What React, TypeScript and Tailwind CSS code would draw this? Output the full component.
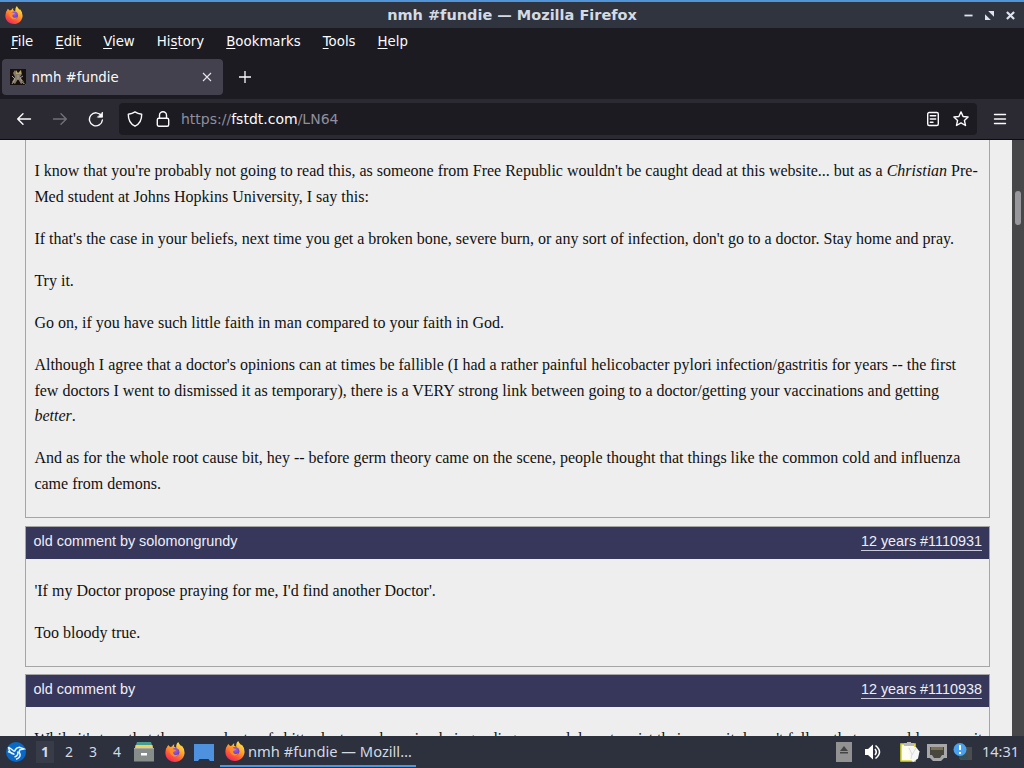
import type { ReactNode } from "react";

const menus = ["File", "Edit", "View", "History", "Bookmarks", "Tools", "Help"];

function FirefoxIcon({ className }: { className: string }) {
  return (
    <svg viewBox="0 0 20 20" className={className}>
      <defs>
        <linearGradient id="flame" x1="0.8" y1="0" x2="0.25" y2="1">
          <stop offset="0" stopColor="#fff04f" />
          <stop offset="0.4" stopColor="#ffa52b" />
          <stop offset="0.7" stopColor="#ff5a35" />
          <stop offset="1" stopColor="#ed2265" />
        </linearGradient>
        <radialGradient id="globe" cx="0.5" cy="0.3" r="0.7">
          <stop offset="0" stopColor="#a460e8" />
          <stop offset="1" stopColor="#5c3bb5" />
        </radialGradient>
      </defs>
      <path
        d="M3.2 3 L5.2 5.1 L7 4.4 Q8 2.8 9.2 2.3 L9 4.5 L11.3 6 Q10.6 2.5 13.2 0 Q14.1 2.3 16.3 4.2 L16.8 3.6 Q19.8 7 19.6 11 C19 16.5 15 20 10 20 C4.2 20 .2 15.6.4 10.5 Q.4 6.5 3.2 3Z"
        fill="url(#flame)"
      />
      <circle cx="10.2" cy="10.2" r="4.2" fill="url(#globe)" />
      <path d="M4.5 7.2 Q7 6 9.6 7.7 L11 8 Q10.5 9.4 8.6 9.7 Q7.4 11 9 12.4 Q11.4 13.7 13.5 12 Q12.5 15.6 8.6 14.6 Q4.5 12.7 4.5 7.2Z" fill="#ff8b2e" />
    </svg>
  );
}

function TitleBar() {
  return (
    <div className="grid h-7 shrink-0 grid-cols-[1fr_auto_1fr] items-center border-t-2 border-[#5294d8] bg-[#2f343f] pr-[9px] pl-[9px]">
      <FirefoxIcon className="-ml-1 h-[18px] w-[18px]" />
      <span className="font-['DejaVu_Sans'] text-[14.5px] leading-none font-bold text-[#d3dae3]">
        nmh #fundie — Mozilla Firefox
      </span>
      <div className="flex items-center justify-end gap-3 text-[#dfe3f0]">
        <svg viewBox="0 0 10 10" className="h-[9px] w-[9px]">
          <path d="M.5 4h9v2h-9z" fill="currentColor" />
        </svg>
        <svg viewBox="0 0 10 10" className="h-[9px] w-[9px]">
          <path d="M3.5 0H10V6.5ZM0 3.5V10H6.5Z" fill="currentColor" />
        </svg>
        <svg viewBox="0 0 10 10" className="h-[9px] w-[9px]">
          <path d="M1 1 9 9M9 1 1 9" stroke="currentColor" strokeWidth="2.4" />
        </svg>
      </div>
    </div>
  );
}

function MenuBar() {
  return (
    <div className="flex h-[27px] shrink-0 items-center gap-[22px] pl-[11px] text-[13.33px]">
      {menus.map((m) => (
        <span key={m}>
          {m === "History" ? (
            <>
              Hi<u className="underline-offset-2">s</u>tory
            </>
          ) : (
            <>
              <u className="underline-offset-2">{m[0]}</u>
              {m.slice(1)}
            </>
          )}
        </span>
      ))}
    </div>
  );
}

function TabStrip() {
  return (
    <div className="flex h-11 shrink-0 items-center pl-[2px]">
      <div className="flex h-9 w-[221px] items-center rounded bg-[#42414d] pr-[11px] pl-2 text-[13.33px]">
        <svg viewBox="0 0 16 16" className="mr-[5.5px] h-4 w-4">
          <path d="M0 0h16v16H0z" fill="#15100e" />
          <path d="M5 1l2 3h3l1-3 1 4-2 3 4 5-3 2-3-5-3 5-3-2 3-5-2-4z" fill="#85796a" />
          <path d="M6 1l2 3 3-3v4H6z" fill="#b6a35d" />
          <path d="M2 7l3 3-3 5M13 7l-3 2 4 6M8 6v5" stroke="#a39e96" fill="none" />
          <path d="M12 12l4 4" stroke="#87433b" />
        </svg>
        <span className="flex-1 pt-px">nmh #fundie</span>
        <svg viewBox="0 0 10 10" className="h-[10px] w-[10px]">
          <path d="M1 1 9 9M9 1 1 9" stroke="#e7e6ee" strokeWidth="1.1" />
        </svg>
      </div>
      <svg viewBox="0 0 12 12" className="ml-4 h-3 w-3">
        <path d="M6 0v12M0 6h12" stroke="#fbfbfe" strokeWidth="1.3" />
      </svg>
    </div>
  );
}

function NavIcon({ children, className = "" }: { children: ReactNode; className?: string }) {
  return (
    <svg
      viewBox="0 0 16 16"
      className={`h-4 w-4 shrink-0 ${className}`}
      fill="none"
      stroke="currentColor"
      strokeWidth="1.4"
      strokeLinecap="round"
      strokeLinejoin="round"
    >
      {children}
    </svg>
  );
}

function NavBar() {
  return (
    <div className="flex h-[41px] shrink-0 items-center border-b border-b-[#0c0c0d] bg-[#2b2a33] pl-4">
      <NavIcon>
        <path d="M14.5 8H1.7M7 2.7 1.7 8 7 13.3" />
      </NavIcon>
      <NavIcon className="ml-5 text-[#71707a]">
        <path d="M1.5 8h12.8M9 2.7 14.3 8 9 13.3" />
      </NavIcon>
      <NavIcon className="ml-5">
        <path d="M13.4 4.8A6.5 6.5 0 1 0 14.4 9" />
        <path d="M14.5 1.5v4.7H9.8Z" fill="currentColor" strokeWidth="0.8" />
      </NavIcon>
      <div className="ml-[15px] flex h-8 w-[858px] items-center rounded bg-[#1c1b22] pr-2 pl-2">
        <NavIcon>
          <path d="M8 .9C10 2.3 12.5 3 14.7 3.3 14.8 8.5 12.7 13 8 15.2 3.3 13 1.2 8.5 1.3 3.3 3.5 3 6 2.3 8 .9Z" />
        </NavIcon>
        <NavIcon className="ml-3">
          <rect x="2.3" y="7.3" width="11.4" height="8" rx="1.5" />
          <path d="M4.5 7V4.2a3.5 3.5 0 0 1 7 0V7" />
        </NavIcon>
        <div className="ml-[10px] flex-1 text-[14px] text-[#8f8f9d]">
          https://<span className="text-[#fbfbfe]">fstdt.com</span>/LN64
        </div>
        <NavIcon>
          <rect x="2.7" y="1.5" width="10.6" height="13" rx="1.5" />
          <path d="M5.3 4.7h5.4M5.3 8h5.4M5.3 11.3H8" />
        </NavIcon>
        <NavIcon className="ml-3">
          <path d="M8 .9 10.1 5.5 15.1 6 11.4 9.4 12.5 14.5 8 11.9 3.5 14.5 4.6 9.4.9 6 5.9 5.5Z" />
        </NavIcon>
      </div>
      <NavIcon className="ml-[15px]">
        <path d="M2.5 3.5h11M2.5 8h11M2.5 12.5h11" />
      </NavIcon>
    </div>
  );
}

function CommentHeader({ author, link }: { author: string; link: string }) {
  return (
    <div className="flex h-8 items-start justify-between bg-[#36375a] pt-[2px] pr-[7px] pl-[7.5px] font-['Liberation_Sans'] text-[14.4px] leading-6 text-[#eeeef8]">
      <span>old comment by {author}</span>
      <span className="mt-[3px] border-b border-[#c9c9dc] leading-[18px]">{link}</span>
    </div>
  );
}

function Page() {
  return (
    <div className="flex min-h-0 flex-1 overflow-hidden bg-[#eee]">
      <div className="w-[1012px] pr-[22px] pl-[25px] font-['Liberation_Serif'] text-base leading-[25.75px] whitespace-nowrap text-[#111]">
        <div className="h-[378px] border border-t-0 border-[#a5a5a8] pt-[18px] pl-[8.4px]">
          <p className="mb-[16.25px]">
            I know that you're probably not going to read this, as someone from Free Republic wouldn't be caught dead at this website... but as a <em>Christian</em> Pre-
            <br />
            Med student at Johns Hopkins University, I say this:
          </p>
          <p className="mb-[16.25px]">
            If that's the case in your beliefs, next time you get a broken bone, severe burn, or any sort of infection, don't go to a doctor. Stay home and pray.
          </p>
          <p className="mb-[16.25px]">Try it.</p>
          <p className="mb-[16.25px]">Go on, if you have such little faith in man compared to your faith in God.</p>
          <p className="mb-[16.25px]">
            Although I agree that a doctor's opinions can at times be fallible (I had a rather painful helicobacter pylori infection/gastritis for years -- the first
            <br />
            few doctors I went to dismissed it as temporary), there is a VERY strong link between going to a doctor/getting your vaccinations and getting
            <br />
            <em>better</em>.
          </p>
          <p>
            And as for the whole root cause bit, hey -- before germ theory came on the scene, people thought that things like the common cold and influenza
            <br />
            came from demons.
          </p>
        </div>

        <div className="mt-2 h-[141px] border border-[#a5a5a8]">
          <CommentHeader author="solomongrundy" link="12 years #1110931" />
          <div className="pt-[19px] pl-[8.4px]">
            <p className="mb-4">'If my Doctor propose praying for me, I'd find another Doctor'.</p>
            <p>Too bloody true.</p>
          </div>
        </div>

        <div className="mt-[7px] h-[141px] border border-[#a5a5a8]">
          <CommentHeader author="" link="12 years #1110938" />
          <p className="pt-[19px] pl-[8.4px]">
            While it's true that there are plenty of shitty doctors who enjoy being a disgrace and do not assist their case, it doesn't follow that we could reverse it
          </p>
        </div>
      </div>
      <div className="flex-1 bg-[#47474a] pt-[51px] pl-[3px]">
        <div className="h-[34px] w-[6px] rounded-full bg-[#98989c]" />
      </div>
    </div>
  );
}

function LauncherIcon() {
  return (
    <svg viewBox="0 0 20 20" className="h-5 w-5">
      <circle cx="10" cy="10" r="10" fill="#0869c6" />
      <path
        d="M2.5 5 Q3.5 12.5 8.5 12.2 M2.5 5 8.5 9.5 M2 9.5 8 12 M8.5 9.5 Q10 5.5 13.5 5.3 L18 7 14 7.8 Q12.5 9.5 14 12 14.8 15.5 10 17.2 M11.5 9.5 Q13 13.5 8.5 15"
        fill="none"
        stroke="#e9f5ff"
        strokeWidth="1.5"
      />
    </svg>
  );
}

function Taskbar() {
  return (
    <div className="relative flex h-8 shrink-0 items-center bg-[#2d303d] pl-[6px] font-['Noto_Sans'] text-[#d3dae3]">
      <LauncherIcon />
      <div className="ml-[10px] flex text-[14px] leading-5">
        <span className="mr-[3px] flex h-[22px] w-[18px] items-center justify-center bg-[#383b48] font-bold">1</span>
        {["2", "3", "4"].map((n) => (
          <span key={n} className="flex h-[22px] w-6 items-center justify-center">
            {n}
          </span>
        ))}
      </div>
      <svg viewBox="0 0 20 20" className="ml-[5px] h-5 w-5">
        <path d="M3 0h14l1 3H2z" fill="#489d93" />
        <path d="M1.5 3h17L19 6H1z" fill="#f2d15b" />
        <path d="M0 6h20v13.5H0z" fill="#868d8a" />
        <path d="M0 6h20v1H0z" fill="#a2a9a6" />
        <path d="M7 11h6v2.5H7z" fill="#fff" />
      </svg>
      <FirefoxIcon className="ml-[11px] h-5 w-5" />
      <svg viewBox="0 0 20 17" className="ml-[9px] h-[17px] w-5">
        <path d="M0 0h20v17h-4l-1.5-2h-9L4 17H0z" fill="#4e91df" />
      </svg>
      <div className="ml-[6px] flex h-[30px] w-[196px] items-center border-b-2 border-[#5294d8] pl-[5px]">
        <FirefoxIcon className="h-5 w-5 shrink-0" />
        <span className="ml-[3px] text-[14.7px] leading-5 whitespace-nowrap">nmh #fundie — Mozill…</span>
      </div>
      <div className="ml-auto flex items-center pr-[5px]">
        <svg viewBox="0 0 16 20" className="h-5 w-4">
          <path d="M0 0h16v20H0z" fill="#929292" />
          <path d="M8 4 12 9H4zM4 10h8v1.5H4z" fill="#444" />
        </svg>
        <svg viewBox="0 0 16 16" className="ml-[13px] h-4 w-4">
          <path d="M0 5h3l5-4.5v15L3 11H0z" fill="#fff" />
          <path d="M10 5q2.5 3 0 6M10.5 1.5q8 6.5 0 13" fill="none" stroke="#fff" strokeWidth="1.6" />
        </svg>
        <svg viewBox="0 0 20 20" className="ml-[19px] h-5 w-5">
          <path d="M1 2h14v17H1z" fill="#fffef0" stroke="#d8d62a" strokeWidth="1.6" />
          <path d="M4 1h3V0h4v1h3v3H4z" fill="#bababa" />
          <path d="M8 5h8l3.5 4.5-1.5 7-5 3.5-3-4z" fill="#f7f7f7" />
          <path d="M9 6 12 12l-1 5M16 6l-4 7" fill="none" stroke="#c6c9cb" strokeWidth=".6" />
        </svg>
        <svg viewBox="0 0 20 17" className="ml-[7px] h-[17px] w-5">
          <path d="M0 0h20v14h-3l-3 3H6l-3-3H0z" fill="#a7a6a8" />
          <path d="M3 3h14v8h-2l-2 3H7l-2-3H3z" fill="#49463d" />
          <path d="M5 3v3M7 3v3M9 3v3M11 3v3M13 3v3M15 3v3" stroke="#c7b47b" strokeWidth=".8" />
        </svg>
        <svg viewBox="0 0 20 18" className="ml-[6px] h-[18px] w-5">
          <path d="M7 4h12v13H7z" fill="#4a4d4d" />
          <path d="M6 12h9v4H6z" fill="#34505b" />
          <circle cx="7" cy="6.5" r="6.5" fill="#4aa2ed" />
          <path d="M6 2h2v5H6zM6 9h2v2H6z" fill="#fff" />
        </svg>
        <span className="ml-[9px] text-[14.5px]">14:31</span>
      </div>
    </div>
  );
}

export default function App() {
  return (
    <div className="flex h-[768px] w-[1024px] flex-col overflow-hidden bg-[#1c1b22] font-['DejaVu_Sans'] text-[#fbfbfe]">
      <TitleBar />
      <MenuBar />
      <TabStrip />
      <NavBar />
      <Page />
      <Taskbar />
    </div>
  );
}
